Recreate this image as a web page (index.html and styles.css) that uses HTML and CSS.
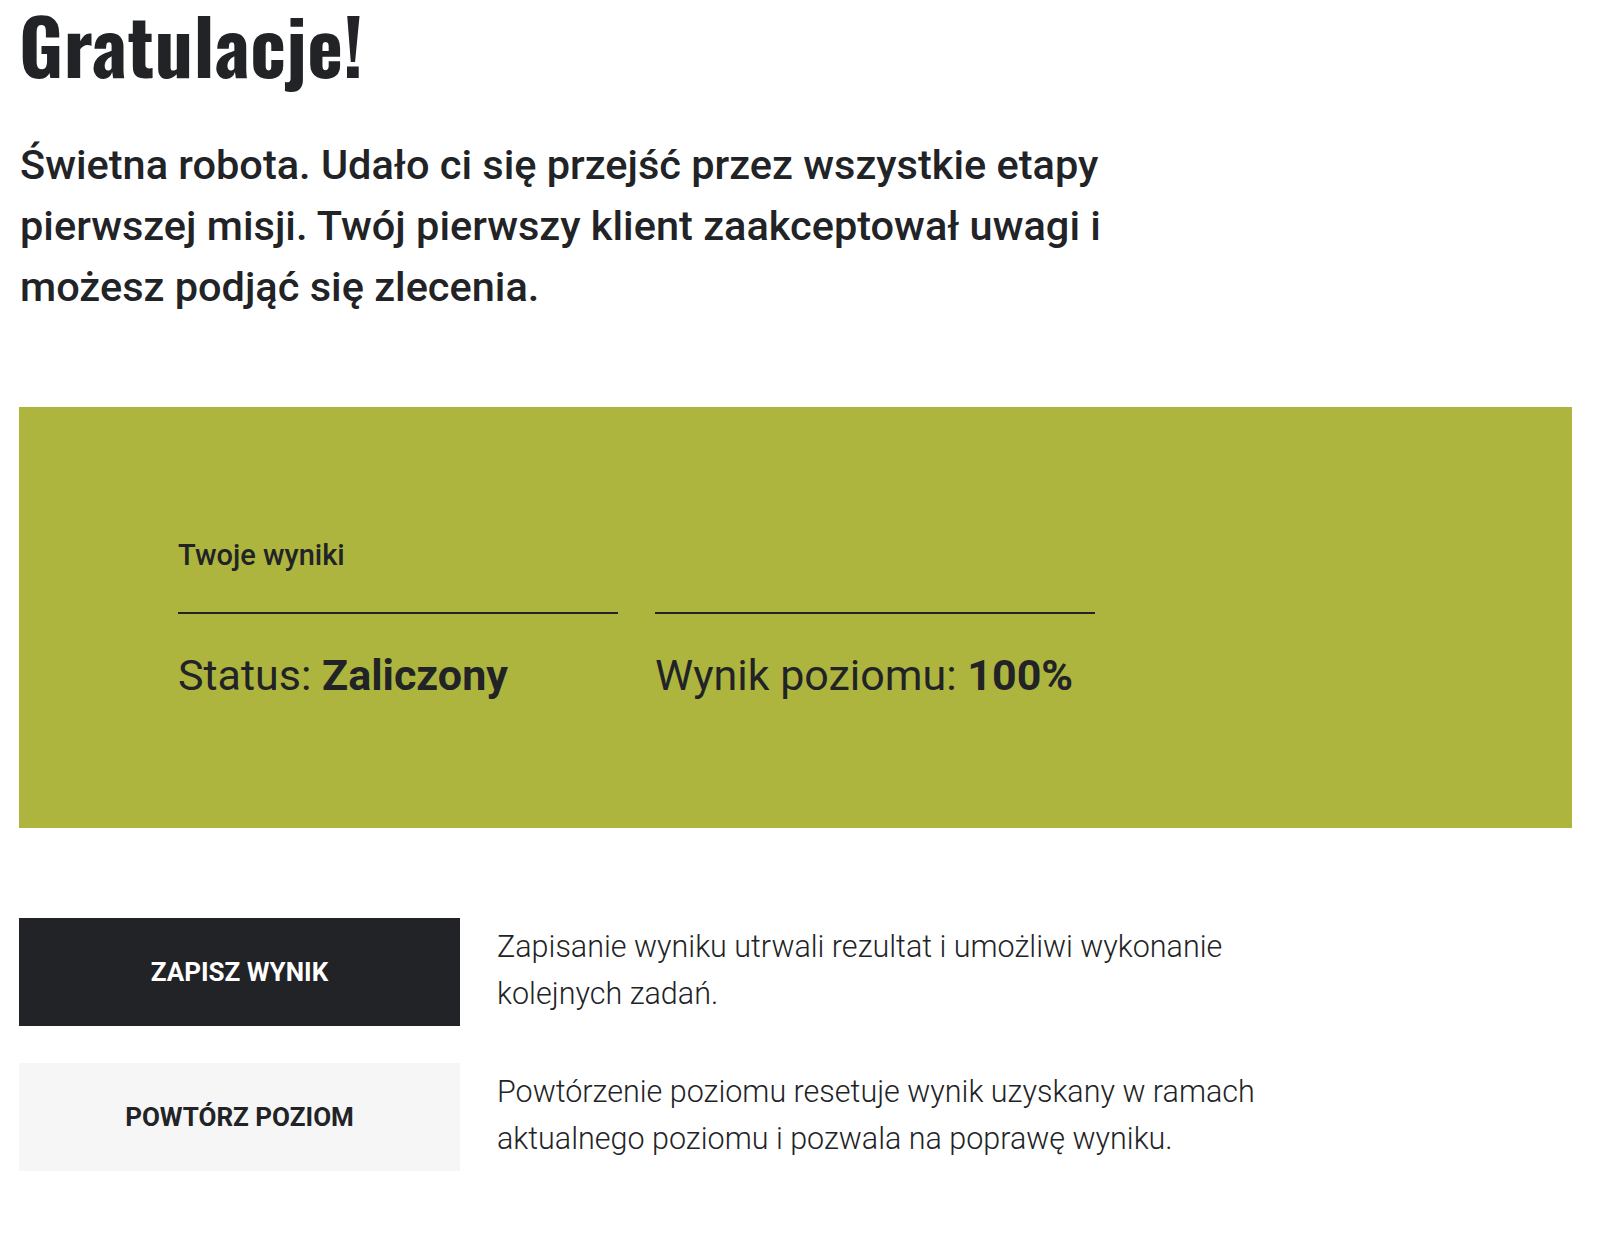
FILE: index.html
```html
<!DOCTYPE html>
<html lang="pl">
<head>
    <meta charset="utf-8">
    <title>Gratulacje!</title>
    <link rel="stylesheet" href="styles.css">
</head>
<body>
    <div class="page">
        <h1 class="title">Gratulacje!</h1>
        <p class="lead">Świetna robota. Udało ci się przejść przez wszystkie etapy pierwszej misji. Twój pierwszy klient zaakceptował uwagi i możesz podjąć się zlecenia.</p>

        <!-- wyniki -->
        <div class="results">
            <div class="results-label">Twoje wyniki</div>
            <div class="results-cols">
                <div class="result">Status: <b>Zaliczony</b></div>
                <div class="result">Wynik poziomu: <b>100%</b></div>
            </div>
        </div>

        <!-- akcje -->
        <div class="actions">
            <div class="action">
                <button class="btn btn-dark">Zapisz wynik</button>
                <p class="action-text">Zapisanie wyniku utrwali rezultat i umożliwi wykonanie kolejnych zadań.</p>
            </div>
            <div class="action">
                <button class="btn btn-light">Powtórz poziom</button>
                <p class="action-text">Powtórzenie poziomu resetuje wynik uzyskany w ramach aktualnego poziomu i pozwala na poprawę wyniku.</p>
            </div>
        </div>
    </div>
</body>
</html>
```

FILE: styles.css
```css
body {
    margin: 0;
    background: #fff;
    color: #222326;
    font-family: Roboto, "Liberation Sans", sans-serif;
}
.page {
    padding: 0 28px 60px 19px;
}
.title {
    margin: 0;
    font-family: Oswald, "Liberation Sans Narrow", "DejaVu Sans Condensed", sans-serif;
    font-size: 76px;
    font-weight: 700;
    line-height: 1.15;
    letter-spacing: 0.5px;
}
.lead {
    width: 1110px;
    margin: 47px 0 0 1px;
    font-size: 41.5px;
    font-weight: 500;
    line-height: 61px;
}
.results {
    margin-top: 90px;
    height: 421px;
    box-sizing: border-box;
    padding: 134px 0 0 159px;
    background: #adb53f;
}
.results-label {
    font-size: 29px;
    font-weight: 500;
    line-height: 1;
    padding-bottom: 42px;
}
.results-cols {
    display: grid;
    grid-template-columns: 440px 440px;
    gap: 37px;
}
.result {
    border-top: 2px solid #222326;
    padding-top: 40px;
    font-size: 43px;
    font-weight: 400;
    line-height: 1;
}
.result b {
    font-weight: 700;
}
.actions {
    margin-top: 90px;
    display: flex;
    flex-direction: column;
    gap: 37px;
}
.action {
    display: flex;
    gap: 37px;
}
.btn {
    flex: none;
    width: 441px;
    height: 108px;
    border: none;
    font-family: Roboto, "Liberation Sans", sans-serif;
    font-size: 26px;
    font-weight: 700;
    text-transform: uppercase;
    cursor: pointer;
}
.btn-dark {
    background: #222327;
    color: #fff;
}
.btn-light {
    background: #f6f6f6;
    color: #222326;
}
.action-text {
    width: 780px;
    margin: 5px 0 0;
    font-size: 30.5px;
    font-weight: 300;
    line-height: 47px;
}
```
